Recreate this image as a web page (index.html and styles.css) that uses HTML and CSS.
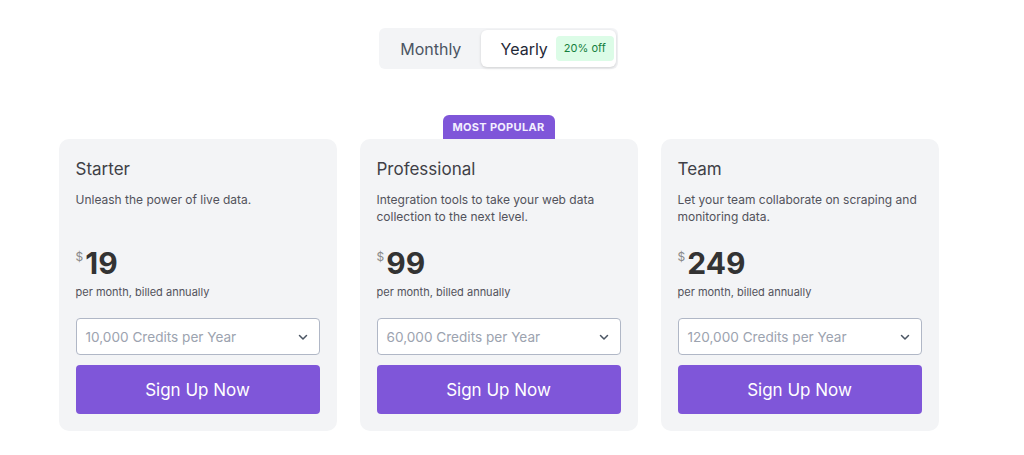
FILE: index.html
```html
<!DOCTYPE html>
<html lang="en">
<head>
  <meta charset="UTF-8">
  <meta name="viewport" content="width=device-width, initial-scale=1.0">
  <title>Pricing</title>
  <link rel="stylesheet" href="styles.css">
</head>
<body>
  <div class="pricing">
    <!-- Billing toggle -->
    <div class="toggle">
      <button class="toggle-option">Monthly</button>
      <button class="toggle-option active">Yearly <span class="discount">20% off</span></button>
    </div>

    <!-- Plans -->
    <div class="plans">
      <div class="plan">
        <h3 class="plan-name">Starter</h3>
        <p class="plan-desc">Unleash the power of live data.</p>
        <div class="price"><span class="currency">$</span>19</div>
        <p class="billing">per month, billed annually</p>
        <div class="select">10,000 Credits per Year
          <svg class="chevron" width="12" height="12" viewBox="0 0 12 12"><path d="M2.5 4.5 6 8l3.5-3.5" fill="none" stroke="#4b5563" stroke-width="1.5" stroke-linecap="round" stroke-linejoin="round"/></svg>
        </div>
        <button class="signup">Sign Up Now</button>
      </div>

      <div class="plan popular">
        <span class="popular-tag">MOST POPULAR</span>
        <h3 class="plan-name">Professional</h3>
        <p class="plan-desc">Integration tools to take your web data collection to the next level.</p>
        <div class="price"><span class="currency">$</span>99</div>
        <p class="billing">per month, billed annually</p>
        <div class="select">60,000 Credits per Year
          <svg class="chevron" width="12" height="12" viewBox="0 0 12 12"><path d="M2.5 4.5 6 8l3.5-3.5" fill="none" stroke="#4b5563" stroke-width="1.5" stroke-linecap="round" stroke-linejoin="round"/></svg>
        </div>
        <button class="signup">Sign Up Now</button>
      </div>

      <div class="plan">
        <h3 class="plan-name">Team</h3>
        <p class="plan-desc">Let your team collaborate on scraping and monitoring data.</p>
        <div class="price"><span class="currency">$</span>249</div>
        <p class="billing">per month, billed annually</p>
        <div class="select">120,000 Credits per Year
          <svg class="chevron" width="12" height="12" viewBox="0 0 12 12"><path d="M2.5 4.5 6 8l3.5-3.5" fill="none" stroke="#4b5563" stroke-width="1.5" stroke-linecap="round" stroke-linejoin="round"/></svg>
        </div>
        <button class="signup">Sign Up Now</button>
      </div>
    </div>
  </div>
</body>
</html>
```

FILE: styles.css
```css
body {
  margin: 0;
  background: #fff;
  font-family: Inter, "Noto Sans", sans-serif;
  color: #374151;
}

.pricing {
  width: 881px;
  margin-left: 58px;
  padding-top: 28px;
  display: flex;
  flex-direction: column;
  align-items: center;
}

.toggle {
  display: flex;
  background: #f3f4f6;
  border-radius: 6px;
  padding: 2px;
  width: 239px;
  height: 41px;
  box-sizing: border-box;
}

.toggle-option {
  border: none;
  background: transparent;
  font-family: inherit;
  font-size: 16px;
  color: #4b5563;
  padding: 0;
  width: 100px;
  display: flex;
  align-items: center;
  justify-content: center;
  border-radius: 6px;
}

.toggle-option.active {
  width: 136px;
  background: #fff;
  color: #1f2937;
  box-shadow: 0 1px 3px rgba(0, 0, 0, 0.15);
  gap: 8px;
  justify-content: flex-start;
  padding-left: 20px;
  white-space: nowrap;
}

.discount {
  background: #dcfce7;
  color: #15803d;
  font-size: 11px;
  border-radius: 4px;
  padding: 0 8px;
  height: 25px;
  line-height: 25px;
  white-space: nowrap;
}

.plans {
  display: flex;
  gap: 23px;
  margin-top: 70px;
}

.plan {
  position: relative;
  width: 278px;
  height: 292px;
  box-sizing: border-box;
  background: #f3f4f6;
  border-radius: 10px;
  padding: 17px;
  display: flex;
  flex-direction: column;
}

.popular-tag {
  position: absolute;
  top: -24px;
  left: 50%;
  transform: translateX(-50%);
  width: 112px;
  height: 24px;
  line-height: 24px;
  text-align: center;
  background: #7f56d9;
  color: #f3efff;
  font-size: 11px;
  font-weight: 700;
  letter-spacing: 0.3px;
  border-radius: 6px 6px 0 0;
}

.plan-name {
  margin: 1px 0 0;
  font-size: 17px;
  font-weight: 400;
  line-height: 24px;
  color: #3f3f46;
}

.plan-desc {
  margin: 10px 0 0;
  font-size: 12px;
  line-height: 17px;
  min-height: 34px;
  color: #52525b;
}

.price {
  margin-top: 20px;
  font-size: 30px;
  font-weight: 700;
  line-height: 36px;
  color: #333;
}

.currency {
  font-size: 12px;
  font-weight: 400;
  color: #8a8a8a;
  vertical-align: top;
  position: relative;
  top: -6px;
  margin-right: 2px;
}

.billing {
  margin: 3px 0 0;
  font-size: 11px;
  line-height: 16px;
  color: #52525b;
}

.select {
  margin-top: 18px;
  height: 37px;
  box-sizing: border-box;
  border: 1px solid #b0b7c6;
  border-radius: 4px;
  background: #fff;
  display: flex;
  align-items: center;
  justify-content: space-between;
  padding: 0 10px 0 9px;
  font-size: 13.6px;
  color: #9ca3af;
}

.signup {
  margin-top: 10px;
  height: 49px;
  border: none;
  border-radius: 4px;
  background: #7f56d9;
  color: #fff;
  font-family: inherit;
  font-size: 17px;
}
```
